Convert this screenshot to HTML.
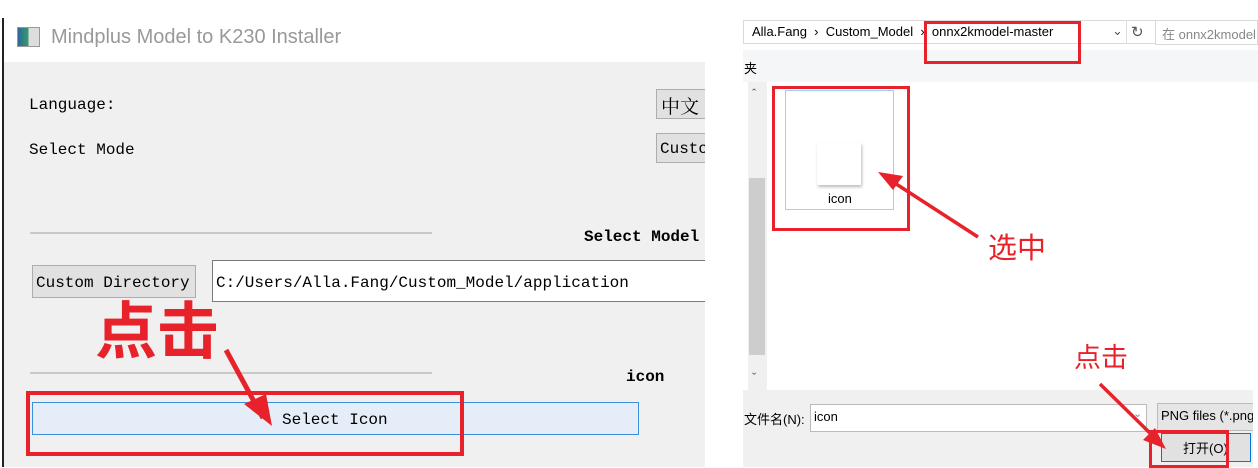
<!DOCTYPE html>
<html><head><meta charset="utf-8"><style>
*{margin:0;padding:0;box-sizing:border-box}
body{width:1258px;height:467px;background:#fff;position:relative;overflow:hidden;font-family:"Liberation Sans","Noto Sans CJK SC",sans-serif}
.a{position:absolute}
.s{font-family:"Liberation Mono","Noto Serif CJK SC",monospace;font-size:16px;color:#000;white-space:nowrap}
.red{border:4px solid #e8222a}
.rt{color:#e8222a;font-family:"Noto Sans CJK SC",sans-serif;white-space:nowrap}
.w{font-family:"Liberation Sans","Noto Sans CJK SC",sans-serif;font-size:13px;color:#000;white-space:nowrap}
</style></head><body>
<!-- left window -->
<div class="a" style="left:2px;top:18px;width:2px;height:449px;background:#222"></div>
<div class="a" style="left:17px;top:27px;width:23px;height:20px;border:1px solid #999;background:linear-gradient(90deg,#2a6a9a 0,#3a9a6a 50%,#ddd 50%)"></div>
<div class="a" style="left:51px;top:26px;font-size:20px;color:#999;white-space:nowrap">Mindplus Model to K230 Installer</div>
<div class="a" style="left:4px;top:62px;width:701px;height:405px;background:#f0f0f0"></div>
<div class="a s" style="left:29px;top:96px">Language:</div>
<div class="a" style="left:656px;top:89px;width:49px;height:30px;background:#e1e1e1;border:1px solid #adadad;border-right:none"></div>
<div class="a s" style="left:661px;top:92px;font-size:19px">中文</div>
<div class="a s" style="left:29px;top:141px">Select Mode</div>
<div class="a" style="left:656px;top:133px;width:49px;height:30px;background:#e1e1e1;border:1px solid #adadad;border-right:none"></div>
<div class="a s" style="left:660px;top:140px;width:45px;overflow:hidden">Custom</div>
<div class="a" style="left:30px;top:232px;width:402px;height:2px;background:#c8c8c8"></div>
<div class="a s" style="left:584px;top:228px;font-weight:bold;width:121px;overflow:hidden">Select Model</div>
<div class="a" style="left:32px;top:265px;width:164px;height:33px;background:#e1e1e1;border:1px solid #adadad"></div>
<div class="a s" style="left:36px;top:274px">Custom Directory</div>
<div class="a" style="left:212px;top:260px;width:493px;height:42px;background:#fff;border:1px solid #7a7a7a;border-right:none"></div>
<div class="a s" style="left:216px;top:274px">C:/Users/Alla.Fang/Custom_Model/application</div>
<div class="a rt" style="left:95px;top:291px;font-size:62px;line-height:70px;font-weight:bold">点击</div>
<div class="a" style="left:30px;top:372px;width:402px;height:2px;background:#c8c8c8"></div>
<div class="a s" style="left:626px;top:368px;font-weight:bold">icon</div>
<div class="a" style="left:32px;top:402px;width:607px;height:33px;background:#e5eef8;border:1px solid #3c8fdc"></div>
<div class="a s" style="left:282px;top:411px">Select Icon</div>
<div class="a red" style="left:26px;top:391px;width:438px;height:65px"></div>
<svg class="a" style="left:0;top:0" width="705" height="467"><line x1="226" y1="350" x2="263" y2="418" stroke="#e8222a" stroke-width="5"/><polygon points="272,426 244,404 266,394" fill="#e8222a"/></svg>

<!-- right dialog -->
<div class="a" style="left:743px;top:20px;width:415px;height:24px;border:1px solid #d9d9d9;background:#fff"></div>
<div class="a w" style="left:752px;top:24px">Alla.Fang &nbsp;›&nbsp; Custom_Model &nbsp;›&nbsp; onnx2kmodel-master</div>
<div class="a w" style="left:1112px;top:23px;color:#555">⌄</div>
<div class="a" style="left:1126px;top:20px;width:22px;height:24px;border-left:1px solid #ddd"></div>
<div class="a w" style="left:1131px;top:23px;color:#555;font-size:15px">↻</div>
<div class="a" style="left:1155px;top:20px;width:103px;height:25px;border:1px solid #d9d9d9;background:#fff"></div>
<div class="a w" style="left:1162px;top:24px;color:#888">在 onnx2kmodel</div>
<div class="a" style="left:743px;top:50px;width:515px;height:32px;background:#f5f6f7"></div>
<div class="a w" style="left:744px;top:58px">夹</div>
<div class="a" style="left:748px;top:82px;width:19px;height:308px;background:#f0f0f0"></div>
<div class="a" style="left:749px;top:178px;width:16px;height:177px;background:#cdcdcd"></div>
<div class="a w" style="left:752px;top:86px;color:#555">ˆ</div>
<div class="a w" style="left:752px;top:370px;color:#555">ˇ</div>
<div class="a" style="left:767px;top:82px;width:491px;height:308px;background:#fff"></div>
<div class="a" style="left:785px;top:90px;width:109px;height:120px;border:1px solid #99d1ff"></div>
<div class="a" style="left:817px;top:143px;width:44px;height:42px;background:#fff;box-shadow:1px 2px 3px #bbb"></div>
<div class="a w" style="left:828px;top:191px">icon</div>
<div class="a red" style="left:772px;top:86px;width:138px;height:145px;border-width:3px"></div>
<div class="a rt" style="left:988px;top:226px;font-size:29px;line-height:40px">选中</div>
<div class="a rt" style="left:1074px;top:338px;font-size:27px;line-height:36px">点击</div>
<div class="a" style="left:743px;top:390px;width:510px;height:77px;background:#f0f0f0"></div>
<div class="a w" style="left:744px;top:409px">文件名(N):</div>
<div class="a" style="left:810px;top:404px;width:337px;height:28px;background:#fff;border:1px solid #bbb"></div>
<div class="a w" style="left:814px;top:409px">icon</div>
<div class="a w" style="left:1133px;top:407px;color:#888;font-size:11px">⌄</div>
<div class="a" style="left:1157px;top:403px;width:96px;height:28px;background:#e5e5e5;border:1px solid #bbb;border-right:none"></div>
<div class="a w" style="left:1161px;top:408px;width:92px;overflow:hidden">PNG files (*.png)</div>
<div class="a" style="left:1161px;top:433px;width:90px;height:29px;background:#e1e1e1;border:1px solid #0078d7"></div>
<div class="a w" style="left:1183px;top:438px">打开(O)</div>
<div class="a red" style="left:1149px;top:430px;width:80px;height:38px;border-width:3px"></div>
<div class="a red" style="left:924px;top:21px;width:157px;height:43px;border-width:3px"></div>
<svg class="a" style="left:705px;top:0" width="553" height="467"><line x1="273" y1="237" x2="185" y2="180" stroke="#e8222a" stroke-width="3.5"/><polygon points="173,172 198,176 188,190" fill="#e8222a"/><line x1="395" y1="384" x2="452" y2="440" stroke="#e8222a" stroke-width="3.5"/><polygon points="461,449 438,440 450,428" fill="#e8222a"/></svg>
</body></html>
